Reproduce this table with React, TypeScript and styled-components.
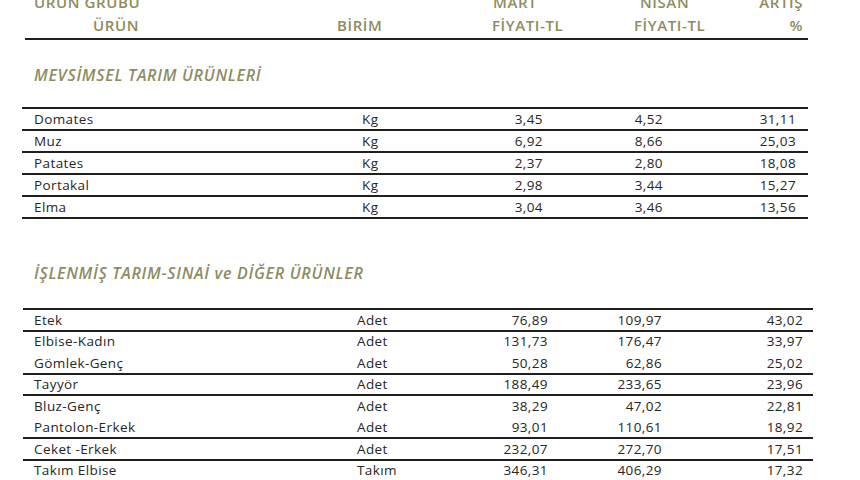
import { FC } from 'react'
import styled, { createGlobalStyle } from 'styled-components'

const GlobalStyle = createGlobalStyle`
    html, body {
        margin: 0;
        padding: 0;
        background: #ffffff;
        overflow: hidden;
    }
    body {
        font-family: "Open Sans", "Liberation Sans", sans-serif;
        color: #333;
    }
`

const olive = '#8e8b62'
const ink = '#262626'
const rule = '#1f1f1f'

const Page = styled.div`
    width: 860px;
    height: 480px;
    overflow: hidden;
    display: flex;
    flex-direction: column;
`

const Header = styled.div`
    margin: -9px 52px 0 25px;
    display: grid;
    grid-template-columns: 305px 150px 140px 110px 78px;
    border-bottom: 2px solid ${rule};
    padding-bottom: 1px;
    color: ${olive};
    font-size: 15px;
    font-weight: 600;
    letter-spacing: 0.6px;
`

interface iHeadCell {
    align?: 'left' | 'right';
}

const HeadCell = styled.div<iHeadCell>`
    display: flex;
    flex-direction: column;
    align-items: ${p => (p.align === 'right' ? 'flex-end' : 'flex-start')};
    padding-right: ${p => (p.align === 'right' ? '5px' : '0')};
`

interface iHeadLine {
    indent: number;
}

const HeadLine = styled.span<iHeadLine>`
    line-height: 23px;
    height: 23px;
    white-space: nowrap;
    padding-left: ${p => p.indent}px;
`

interface iSectionTitle {
    top: number;
    bottom: number;
}

const SectionTitle = styled.div<iSectionTitle>`
    margin: ${p => p.top}px 0 ${p => p.bottom}px 34px;
    font-style: italic;
    font-weight: 600;
    font-size: 16px;
    line-height: 20px;
    color: ${olive};
    letter-spacing: 0.7px;
    white-space: nowrap;
`

interface iTable {
    left: number;
    columns: string;
}

const Table = styled.div<iTable>`
    margin-left: ${p => p.left}px;
    border-top: 2px solid ${rule};
    display: grid;
    grid-template-columns: ${p => p.columns};
    width: max-content;
`

interface iRow {
    rowHeight: number;
    ruled: boolean;
}

const Row = styled.div<iRow>`
    display: contents;
    & > div {
        box-sizing: border-box;
        height: ${p => p.rowHeight}px;
        border-bottom: ${p => (p.ruled ? `2px solid ${rule}` : 'none')};
        padding-bottom: ${p => (p.ruled ? '0' : '2px')};
    }
`

interface iCell {
    align?: 'left' | 'right';
    pad: number;
}

const Cell = styled.div<iCell>`
    display: flex;
    align-items: center;
    justify-content: ${p => (p.align === 'right' ? 'flex-end' : 'flex-start')};
    padding-left: ${p => (p.align === 'right' ? 0 : p.pad)}px;
    padding-right: ${p => (p.align === 'right' ? p.pad : 0)}px;
    font-size: 13.5px;
    letter-spacing: 0.4px;
    color: ${ink};
    white-space: nowrap;
`

type Item = [string, string, string, string, string, boolean?]

const seasonal: Item[] = [
    ['Domates', 'Kg', '3,45', '4,52', '31,11', true],
    ['Muz', 'Kg', '6,92', '8,66', '25,03', true],
    ['Patates', 'Kg', '2,37', '2,80', '18,08', true],
    ['Portakal', 'Kg', '2,98', '3,44', '15,27', true],
    ['Elma', 'Kg', '3,04', '3,46', '13,56', true],
]

const processed: Item[] = [
    ['Etek', 'Adet', '76,89', '109,97', '43,02', true],
    ['Elbise-Kadın', 'Adet', '131,73', '176,47', '33,97', false],
    ['Gömlek-Genç', 'Adet', '50,28', '62,86', '25,02', true],
    ['Tayyör', 'Adet', '188,49', '233,65', '23,96', true],
    ['Bluz-Genç', 'Adet', '38,29', '47,02', '22,81', false],
    ['Pantolon-Erkek', 'Adet', '93,01', '110,61', '18,92', true],
    ['Ceket -Erkek', 'Adet', '232,07', '272,70', '17,51', true],
    ['Takım Elbise', 'Takım', '346,31', '406,29', '17,32', false],
]

interface iPriceTable {
    items: Item[];
    left: number;
    columns: string;
    rowHeight: number;
    pads: number[];
}

const PriceTable: FC<iPriceTable> = ({ items, left, columns, rowHeight, pads }) => (
    <Table left={left} columns={columns}>
        {items.map(([name, unit, mart, nisan, artis, ruled]) => (
            <Row key={name} rowHeight={rowHeight} ruled={!!ruled}>
                <Cell pad={pads[0]}>{name}</Cell>
                <Cell pad={pads[1]}>{unit}</Cell>
                <Cell align="right" pad={pads[2]}>{mart}</Cell>
                <Cell align="right" pad={pads[3]}>{nisan}</Cell>
                <Cell align="right" pad={pads[4]}>{artis}</Cell>
            </Row>
        ))}
    </Table>
)

const App: FC = () => {
    return (
        <Page>
            <GlobalStyle />
            <Header>
                <HeadCell>
                    <HeadLine indent={9}>ÜRÜN GRUBU</HeadLine>
                    <HeadLine indent={68}>ÜRÜN</HeadLine>
                </HeadCell>
                <HeadCell>
                    <HeadLine indent={7}></HeadLine>
                    <HeadLine indent={7}>BİRİM</HeadLine>
                </HeadCell>
                <HeadCell>
                    <HeadLine indent={13}>MART</HeadLine>
                    <HeadLine indent={12}>FİYATI-TL</HeadLine>
                </HeadCell>
                <HeadCell>
                    <HeadLine indent={20}>NİSAN</HeadLine>
                    <HeadLine indent={14}>FİYATI-TL</HeadLine>
                </HeadCell>
                <HeadCell align="right">
                    <HeadLine indent={0}>ARTIŞ</HeadLine>
                    <HeadLine indent={0}>%</HeadLine>
                </HeadCell>
            </Header>

            <SectionTitle top={25} bottom={22}>MEVSİMSEL TARIM ÜRÜNLERİ</SectionTitle>
            <PriceTable
                items={seasonal}
                left={22}
                columns="328px 100px 98px 120px 140px"
                rowHeight={22}
                pads={[12, 12, 5, 5, 12]}
            />

            <SectionTitle top={44} bottom={25}>İŞLENMİŞ TARIM-SINAİ ve DİĞER ÜRÜNLER</SectionTitle>
            <PriceTable
                items={processed}
                left={23}
                columns="322px 105px 102px 116px 145px"
                rowHeight={21.5}
                pads={[11, 12, 4, 6, 10]}
            />
        </Page>
    )
}

export default App
